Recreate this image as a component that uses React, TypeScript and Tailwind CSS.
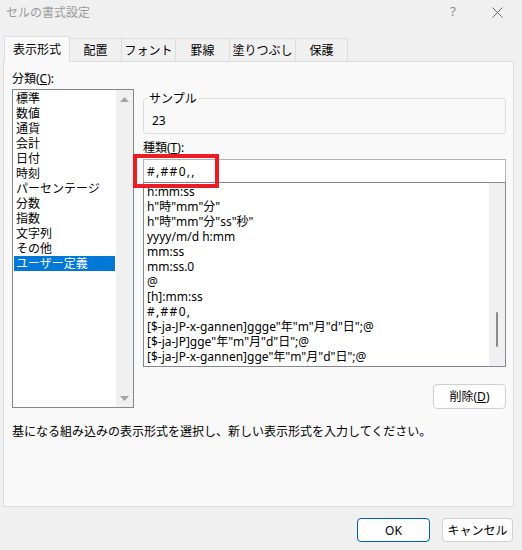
import React from "react";

const categories = [
  "標準",
  "数値",
  "通貨",
  "会計",
  "日付",
  "時刻",
  "パーセンテージ",
  "分数",
  "指数",
  "文字列",
  "その他",
  "ユーザー定義",
];

const formats = [
  "h:mm:ss",
  'h"時"mm"分"',
  'h"時"mm"分"ss"秒"',
  "yyyy/m/d h:mm",
  "mm:ss",
  "mm:ss.0",
  "@",
  "[h]:mm:ss",
  "#,##0,",
  '[$-ja-JP-x-gannen]ggge"年"m"月"d"日";@',
  '[$-ja-JP]gge"年"m"月"d"日";@',
  '[$-ja-JP-x-gannen]gge"年"m"月"d"日";@',
];

const tabs = ["配置", "フォント", "罫線", "塗りつぶし", "保護"];
const tabWidths = ["w-[52px]", "w-[54px]", "w-[54px]", "w-[66px]", "w-[52px]"];

export default function App() {
  return (
    <div className="w-[522px] h-[550px] bg-[#f0f0f0] overflow-hidden text-[12px] leading-[15px] text-black font-['Noto_Sans','Noto_Sans_CJK_JP',sans-serif]">
      {/* title bar */}
      <div className="h-[36px] flex items-start justify-between">
        <div className="pl-[6px] pt-[5px] text-[12px] text-[#9a9a9a]">セルの書式設定</div>
        <div className="flex items-center pt-[4px] pr-[3px]">
          <span className="w-[20px] text-center text-[13px] text-[#8a8a8a]">?</span>
          <span className="w-[44px] ml-[12px] flex justify-center pt-[2px]">
            <svg width="11" height="11" viewBox="0 0 11 11">
              <path d="M0.5 0.5 L10.5 10.5 M10.5 0.5 L0.5 10.5" stroke="#6b6b6b" strokeWidth="1" />
            </svg>
          </span>
        </div>
      </div>

      {/* tabs */}
      <div className="flex items-end pl-[4px] h-[25px]">
        <div className="relative z-10 w-[66px] h-[26px] -mb-px flex items-center justify-center border border-b-0 border-[#dcdcdc] bg-[#f9f9f9]">
          表示形式
        </div>
        {tabs.map((t, i) => (
          <div
            key={t}
            className={`${tabWidths[i]} h-[23px] flex items-center justify-center border border-l-0 border-b-0 border-[#dcdcdc] bg-[#f0f0f0]`}
          >
            {t}
          </div>
        ))}
      </div>

      {/* panel */}
      <div className="ml-[3px] w-[511px] h-[446px] border border-[#dcdcdc] bg-[#f9f9f9] flex flex-col">
        <div className="flex pl-[8px]">
          {/* left column */}
          <div className="flex flex-col pt-[9px]">
            <div>
              分類(<span className="underline">C</span>):
            </div>
            <div className="mt-[3px] w-[122px] h-[319px] border border-[#828790] bg-white flex">
              <div className="flex-1 pt-[1px] px-[1px]">
                {categories.map((c) => (
                  <div
                    key={c}
                    className={`h-[15px] pl-[2px] whitespace-nowrap ${c === "ユーザー定義" ? "bg-[#0078d7] text-white" : ""}`}
                  >
                    {c}
                  </div>
                ))}
              </div>
              <div className="w-[17px] bg-[#f0f0f0] flex flex-col items-center justify-between pt-[7px] pb-[6px]">
                <svg width="9" height="5" viewBox="0 0 9 5">
                  <path d="M4.5 0 L9 5 L0 5 Z" fill="#a3a3a3" />
                </svg>
                <svg width="9" height="5" viewBox="0 0 9 5">
                  <path d="M0 0 L9 0 L4.5 5 Z" fill="#a3a3a3" />
                </svg>
              </div>
            </div>
          </div>

          {/* right column */}
          <div className="ml-[9px] w-[363px] flex flex-col">
            <div className="relative mt-[36px] h-[36px] border border-[#dcdcdc] rounded-[3px]">
              <span className="absolute left-[3px] top-[-8px] px-[2px] bg-[#f9f9f9]">サンプル</span>
              <div className="pl-[8px] pt-[14px]">23</div>
            </div>
            <div className="mt-[6px]">
              種類(<span className="underline">T</span>):
            </div>
            <div className="relative mt-[4px] h-[23px] border border-b-0 border-[#b4b4b4] bg-white flex items-center pl-[3px]">
              <span className="tracking-[1.3px]">#,##0,,</span>
              <div className="absolute left-[-11px] top-[-6px] w-[86px] h-[34px] border-[4px] border-[#ec1c24]" />
            </div>
            <div className="h-[185px] border border-[#828790] bg-white flex">
              <div className="flex-1 pt-[1px] pl-[3px] overflow-hidden">
                {formats.map((f) => (
                  <div key={f} className={`h-[15px] whitespace-nowrap ${f === "#,##0," ? "tracking-[1.3px]" : ""}`}>
                    {f}
                  </div>
                ))}
              </div>
              <div className="w-[16px] bg-[#f0f0f0] flex flex-col items-center pt-[129px]">
                <div className="w-[2px] h-[35px] bg-[#8b8b8b] rounded-full" />
              </div>
            </div>
            <div className="mt-[17px] self-end w-[73px] h-[25px] border border-[#d0d0d0] rounded-[4px] bg-[#fdfdfd] flex items-center justify-center">
              削除(<span className="underline">D</span>)
            </div>
          </div>
        </div>
        <div className="pl-[8px] mt-[15px]">
          基になる組み込みの表示形式を選択し、新しい表示形式を入力してください。
        </div>
      </div>

      {/* footer buttons */}
      <div className="flex justify-end gap-[12px] pr-[9px] mt-[11px]">
        <div className="w-[73px] h-[24px] border border-[#005fb8] rounded-[4px] bg-[#fdfdfd] flex items-center justify-center">
          OK
        </div>
        <div className="w-[71px] h-[24px] border border-[#d0d0d0] rounded-[4px] bg-[#fdfdfd] flex items-center justify-center">
          キャンセル
        </div>
      </div>
    </div>
  );
}
